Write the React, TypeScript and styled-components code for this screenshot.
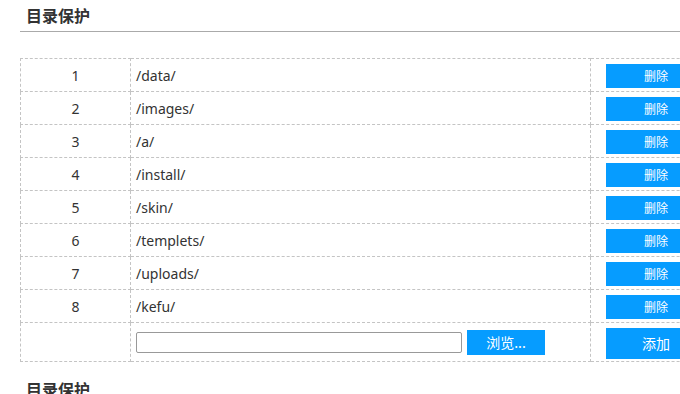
import * as React from "react";
import styled, { createGlobalStyle } from "styled-components";

const GlobalStyle = createGlobalStyle`
  html, body {
    margin: 0;
    padding: 0;
    overflow: hidden;
    background: #fff;
  }
  body {
    font-family: "Noto Sans", "Noto Sans CJK SC", sans-serif;
    font-size: 14px;
    color: #333;
  }
`;

const Section = styled.div`
  padding-left: 20px;
  width: 700px;
`;

const Heading = styled.h3<{ $plain?: boolean }>`
  margin: ${(p) => (p.$plain ? "12px 0 0" : "0")};
  height: 31px;
  line-height: 30px;
  padding-left: 6px;
  font-size: 16px;
  font-weight: bold;
  color: #333;
  border-bottom: ${(p) => (p.$plain ? "0" : "1px solid #aaa")};
  font-family: "Noto Sans CJK SC", sans-serif;
`;

const Table = styled.table`
  margin-top: 26px;
  border-collapse: collapse;
  table-layout: fixed;
  width: 720px;

  td {
    border: 1px dashed #c4c4c4;
    padding: 0;
    height: 32px;
  }
`;

const NumCell = styled.td`
  width: 109px;
  text-align: center;
`;

const PathCell = styled.td`
  width: 454px;
  padding-left: 5px !important;
`;

const ActionCell = styled.td`
  padding-left: 15px !important;
`;

const LastRow = styled.tr`
  td {
    height: 38px;
  }
`;

const Button = styled.button<{ $big?: boolean }>`
  display: block;
  width: 100px;
  height: ${(p) => (p.$big ? "31px" : "24px")};
  margin-top: ${(p) => (p.$big ? "2px" : "1px")};
  border: 0;
  padding: 0;
  background: #069cff;
  color: #fff;
  font-family: "Noto Sans CJK SC", sans-serif;
  font-size: ${(p) => (p.$big ? "14px" : "12px")};
  cursor: pointer;
`;

const UploadRow = styled.div`
  display: flex;
  align-items: center;
  gap: 5px;
`;

const PathInput = styled.input`
  box-sizing: border-box;
  width: 326px;
  height: 21px;
  border: 1px solid #999;
  border-radius: 2px;
  padding: 0 4px;
  margin: 0;
`;

const BrowseButton = styled.button`
  width: 78px;
  height: 25px;
  border: 0;
  padding: 0;
  background: #069cff;
  color: #fff;
  font-family: "Noto Sans CJK SC", sans-serif;
  font-size: 14px;
`;

const dirs = [
  "/data/",
  "/images/",
  "/a/",
  "/install/",
  "/skin/",
  "/templets/",
  "/uploads/",
  "/kefu/",
];

export default function App() {
  return (
    <>
      <GlobalStyle />
      <Section>
        <Heading>目录保护</Heading>
        <Table>
          <tbody>
            {dirs.map((d, i) => (
              <tr key={d}>
                <NumCell>{i + 1}</NumCell>
                <PathCell>{d}</PathCell>
                <ActionCell>
                  <Button>删除</Button>
                </ActionCell>
              </tr>
            ))}
            <LastRow>
              <NumCell />
              <PathCell>
                <UploadRow>
                  <PathInput type="text" />
                  <BrowseButton>浏览...</BrowseButton>
                </UploadRow>
              </PathCell>
              <ActionCell>
                <Button $big>添加</Button>
              </ActionCell>
            </LastRow>
          </tbody>
        </Table>
        <Heading $plain>目录保护</Heading>
      </Section>
    </>
  );
}
